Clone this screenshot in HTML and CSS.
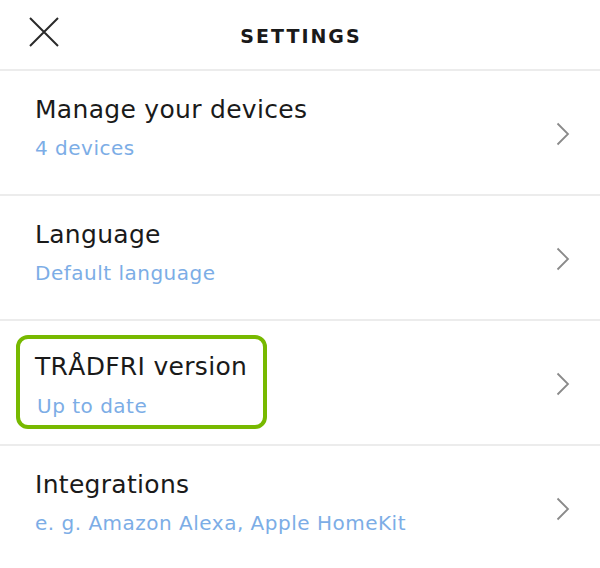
FILE: index.html
```html
<!DOCTYPE html>
<html>
<head>
<meta charset="utf-8">
<link rel="stylesheet" href="styles.css">
</head>
<body>
<header class="topbar">
  <svg class="close" width="30" height="30" viewBox="0 0 30 30"><path d="M1 1 L29 29 M29 1 L1 29" stroke="#2a2a2a" stroke-width="2" fill="none"/></svg>
  <h1 class="heading">SETTINGS</h1>
</header>
<ul class="list">
  <li class="row">
    <div class="texts">
      <div class="title">Manage your devices</div>
      <div class="sub">4 devices</div>
    </div>
    <svg class="chev" width="14" height="24" viewBox="0 0 14 24"><path d="M1.5 1.5 L12 12 L1.5 22.5" stroke="#8a8a8a" stroke-width="1.8" fill="none"/></svg>
  </li>
  <li class="row">
    <div class="texts">
      <div class="title">Language</div>
      <div class="sub">Default language</div>
    </div>
    <svg class="chev" width="14" height="24" viewBox="0 0 14 24"><path d="M1.5 1.5 L12 12 L1.5 22.5" stroke="#8a8a8a" stroke-width="1.8" fill="none"/></svg>
  </li>
  <li class="row">
    <div class="texts texts-low">
      <div class="title">TRÅDFRI version</div>
      <div class="sub sub-shift">Up to date</div>
    </div>
    <div class="highlight"></div>
    <svg class="chev" width="14" height="24" viewBox="0 0 14 24"><path d="M1.5 1.5 L12 12 L1.5 22.5" stroke="#8a8a8a" stroke-width="1.8" fill="none"/></svg>
  </li>
  <li class="row last">
    <div class="texts">
      <div class="title">Integrations</div>
      <div class="sub">e. g. Amazon Alexa, Apple HomeKit</div>
    </div>
    <svg class="chev" width="14" height="24" viewBox="0 0 14 24"><path d="M1.5 1.5 L12 12 L1.5 22.5" stroke="#8a8a8a" stroke-width="1.8" fill="none"/></svg>
  </li>
</ul>
</body>
</html>
```
FILE: styles.css
```css
html, body {
  margin: 0;
  padding: 0;
  background: #ffffff;
}
body {
  width: 600px;
  height: 568px;
  overflow: hidden;
  font-family: "DejaVu Sans", Verdana, sans-serif;
}
.topbar {
  height: 69px;
  border-bottom: 2px solid #ececec;
  display: flex;
  align-items: center;
  justify-content: center;
  position: relative;
}
.close {
  position: absolute;
  left: 29px;
  top: 17px;
}
.heading {
  margin: 0;
  font-size: 19px;
  font-weight: bold;
  letter-spacing: 2px;
  color: #1a1a1a;
  padding-top: 2px;
  padding-left: 2px;
}
.list {
  list-style: none;
  margin: 0;
  padding: 0;
}
.row {
  position: relative;
  height: 123px;
  border-bottom: 2px solid #ececec;
  display: flex;
  align-items: center;
  justify-content: space-between;
  padding: 0 30px 0 35px;
  box-sizing: content-box;
}
.row.last {
  border-bottom: none;
}
.texts {
  align-self: flex-start;
  display: flex;
  flex-direction: column;
  gap: 10px;
  padding-top: 24px;
}
.texts-low {
  padding-top: 31px;
  gap: 11px;
}
.title {
  font-size: 25px;
  line-height: 30px;
  letter-spacing: 0.3px;
  color: #1a1a1a;
}
.sub {
  font-size: 20px;
  line-height: 26px;
  letter-spacing: 0.5px;
  color: #7cade6;
}
.sub-shift {
  margin-left: 2px;
}
.chev {
  margin-top: 2px;
}
.highlight {
  position: absolute;
  left: 16px;
  top: 14px;
  width: 243px;
  height: 86px;
  border: 4px solid #77b900;
  border-radius: 12px;
  pointer-events: none;
}
```
